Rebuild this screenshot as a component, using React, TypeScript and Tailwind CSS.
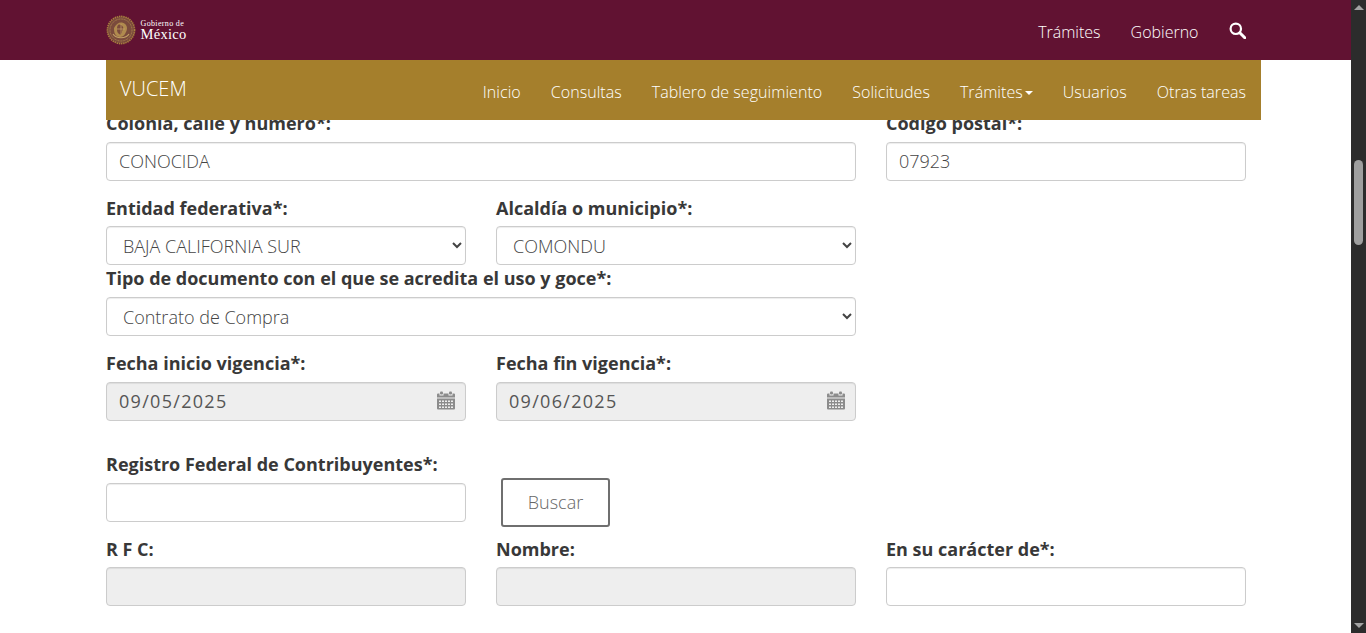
import { ReactNode } from "react";

const navItems = ["Inicio", "Consultas", "Tablero de seguimiento", "Solicitudes", "Trámites", "Usuarios", "Otras tareas"];

const inputClass =
  "block w-full h-[39px] px-3 pb-[2px] text-[18px] font-light text-[#444] bg-white border border-[#ccc] rounded-[4px] shadow-[inset_0_1px_1px_rgba(0,0,0,0.075)] outline-none";
const selectClass =
  "block w-full h-[39px] px-3 text-[18px] font-light text-[#444] bg-white border border-[#ccc] rounded-[4px] shadow-[inset_0_1px_1px_rgba(0,0,0,0.075)] outline-none mt-[7px]";
const disabledClass =
  "block w-full h-[39px] px-3 pb-[2px] text-[18px] text-[#555] bg-[#eee] border border-[#ccc] rounded-[4px] shadow-[inset_0_1px_1px_rgba(0,0,0,0.075)] outline-none";

const Label = ({ children }: { children: ReactNode }) => (
  <label className="block font-bold text-[18px] leading-[22px] text-[#383838]">{children}</label>
);

const CalendarIcon = () => (
  <svg viewBox="0 0 18 18" className="absolute right-[11px] top-[9px] w-[18px] h-[19px]" fill="#8c8c8c">
    <rect x="3" y="0" width="3" height="3" rx="1" />
    <rect x="12" y="0" width="3" height="3" rx="1" />
    <path d="M1 2h1.5v2h4V2h5v2h4V2H17a1 1 0 0 1 1 1v3H0V3a1 1 0 0 1 1-1z" />
    <path
      fillRule="evenodd"
      d="M0 7h18v10a1 1 0 0 1-1 1H1a1 1 0 0 1-1-1zM2 9v1.5h2V9zm3 0v1.5h2V9zm3 0v1.5h2V9zm3 0v1.5h2V9zm3 0v1.5h2V9zM2 12v1.5h2V12zm3 0v1.5h2V12zm3 0v1.5h2V12zm3 0v1.5h2V12zm3 0v1.5h2V12zM2 15v1.5h2V15zm3 0v1.5h2V15zm3 0v1.5h2V15zm3 0v1.5h2V15zm3 0v1.5h2V15z"
    />
  </svg>
);

const DateField = ({ value }: { value: string }) => (
  <div className="relative">
    <input readOnly value={value} className={`${disabledClass} tracking-[1.3px]`} />
    <CalendarIcon />
  </div>
);

const Emblem = () => (
  <svg viewBox="0 0 30 30" className="w-[30px] h-[30px]">
    <circle cx="15" cy="15" r="13.6" fill="#7a4a3c" stroke="#a8803f" strokeWidth="1.6" strokeDasharray="1.4 0.8" />
    <circle cx="15" cy="15" r="11" fill="none" stroke="#b58f52" strokeWidth="0.8" strokeDasharray="1 0.6" />
    <path d="M8 13c2-4 5-6 8-5.500s5 3 5 5.500-1 4-2 6-3 3-5 3-4-1-5-3-1-4-1-6z" fill="#b08a4e" />
    <path d="M12 10c2-1 4 0 5 2s-1 3-1 5-2 3-3 2-2-2-2-4 0-4 1-5z" fill="#7a4a3c" />
    <path d="M15 9v10M11 14h8" stroke="#c9a56c" strokeWidth="0.7" />
    <path d="M7 19c3 5 13 5 16 0" fill="none" stroke="#c2a065" strokeWidth="1.2" />
  </svg>
);

const SearchIcon = () => (
  <svg viewBox="0 0 17 17" className="w-[17px] h-[17px] -mt-[3px]" fill="none" stroke="white">
    <circle cx="6.8" cy="6.8" r="5.2" strokeWidth="2.2" />
    <path d="M10.8 10.8l5 5" strokeWidth="3" strokeLinecap="round" />
  </svg>
);

const Scrollbar = () => (
  <div className="w-[15px] shrink-0 h-full bg-[#2c2c2c] flex flex-col items-center relative">
    <div className="mt-[5px] w-0 h-0 border-x-[5px] border-x-transparent border-b-[5px] border-b-[#a3a3a3]" />
    <div className="mt-[150px] w-[9px] h-[85px] rounded-full bg-[#9f9f9f]" />
    <div className="mt-auto mb-[5px] w-0 h-0 border-x-[5px] border-x-transparent border-t-[5px] border-t-[#a3a3a3]" />
  </div>
);

const Header = () => (
  <div className="absolute top-0 left-0 right-0 z-10">
    <div className="h-[60px] bg-[#611232]">
      <div className="w-[1140px] mx-auto flex items-center h-full">
        <Emblem />
        <div className="ml-[5px] text-white font-['Liberation_Serif',serif] flex flex-col">
          <span className="text-[8px] leading-[8px] tracking-[0.35px]">Gobierno de</span>
          <span className="text-[14.5px] leading-[12px] tracking-[0.3px]">México</span>
        </div>
        <div className="ml-auto mt-[4px] flex items-center gap-[30px] text-white text-[16px] font-light">
          <span>Trámites</span>
          <span>Gobierno</span>
          <SearchIcon />
        </div>
      </div>
    </div>
    <div className="w-[1155px] ml-[106px] h-[60px] bg-[#a57f2c] flex items-center pl-[14px] pr-[15px] text-white">
      <span className="text-[20px] font-light -mt-[2px]">VUCEM</span>
      <nav className="ml-auto flex gap-[30px] text-[16px] font-light tracking-[0.05px] mt-[3px]">
        {navItems.map((item) => (
          <span key={item} className="flex items-center">
            {item}
            {item === "Trámites" && (
              <span className="ml-[2px] mt-[2px] w-0 h-0 border-x-[4px] border-x-transparent border-t-[4px] border-t-white" />
            )}
          </span>
        ))}
      </nav>
    </div>
  </div>
);

export default function App() {
  return (
    <div className="relative flex h-[633px] w-full overflow-hidden bg-white font-['Open_Sans',sans-serif]">
      <div className="relative flex-1 min-w-0 overflow-hidden">
        <Header />
        <main className="w-[1140px] ml-[106px] pt-[112px]">
          <div className="grid grid-cols-3 gap-x-[30px]">
            <div className="col-span-2">
              <Label>Colonia, calle y número*:</Label>
              <div className="mt-[8px]">
                <input readOnly value="CONOCIDA" className={inputClass} />
              </div>
            </div>
            <div>
              <Label>Código postal*:</Label>
              <div className="mt-[8px]">
                <input readOnly value="07923" className={inputClass} />
              </div>
            </div>
          </div>

          <div className="grid grid-cols-3 gap-x-[30px] mt-[16px]">
            <div>
              <Label>Entidad federativa*:</Label>
              <select className={selectClass} defaultValue="BAJA CALIFORNIA SUR">
                <option>BAJA CALIFORNIA SUR</option>
              </select>
            </div>
            <div>
              <Label>Alcaldía o municipio*:</Label>
              <select className={selectClass} defaultValue="COMONDU">
                <option>COMONDU</option>
              </select>
            </div>
          </div>

          <div className="grid grid-cols-3 gap-x-[30px] mt-[2px]">
            <div className="col-span-2">
              <Label>Tipo de documento con el que se acredita el uso y goce*:</Label>
              <select className={`${selectClass} !mt-[8px]`} defaultValue="Contrato de Compra">
                <option>Contrato de Compra</option>
              </select>
            </div>
          </div>

          <div className="grid grid-cols-3 gap-x-[30px] mt-[16px]">
            <div>
              <Label>Fecha inicio vigencia*:</Label>
              <div className="mt-[8px]">
                <DateField value="09/05/2025" />
              </div>
            </div>
            <div>
              <Label>Fecha fin vigencia*:</Label>
              <div className="mt-[8px]">
                <DateField value="09/06/2025" />
              </div>
            </div>
          </div>

          <div className="grid grid-cols-3 gap-x-[30px] mt-[32px]">
            <div>
              <Label>Registro Federal de Contribuyentes*:</Label>
              <div className="mt-[8px]">
                <input readOnly className={inputClass} />
              </div>
            </div>
            <div className="pl-[5px] pt-[25px]">
              <button className="w-[109px] h-[49px] border-2 border-[#6f6f6f] rounded-[3px] bg-white text-[18px] font-light text-[#666]">
                Buscar
              </button>
            </div>
          </div>

          <div className="grid grid-cols-3 gap-x-[30px] mt-[11px]">
            <div>
              <Label>R F C:</Label>
              <div className="mt-[7px]">
                <input readOnly className={disabledClass} />
              </div>
            </div>
            <div>
              <Label>Nombre:</Label>
              <div className="mt-[7px]">
                <input readOnly className={disabledClass} />
              </div>
            </div>
            <div>
              <Label>En su carácter de*:</Label>
              <div className="mt-[7px]">
                <input readOnly className={inputClass} />
              </div>
            </div>
          </div>
        </main>
      </div>
      <Scrollbar />
    </div>
  );
}
